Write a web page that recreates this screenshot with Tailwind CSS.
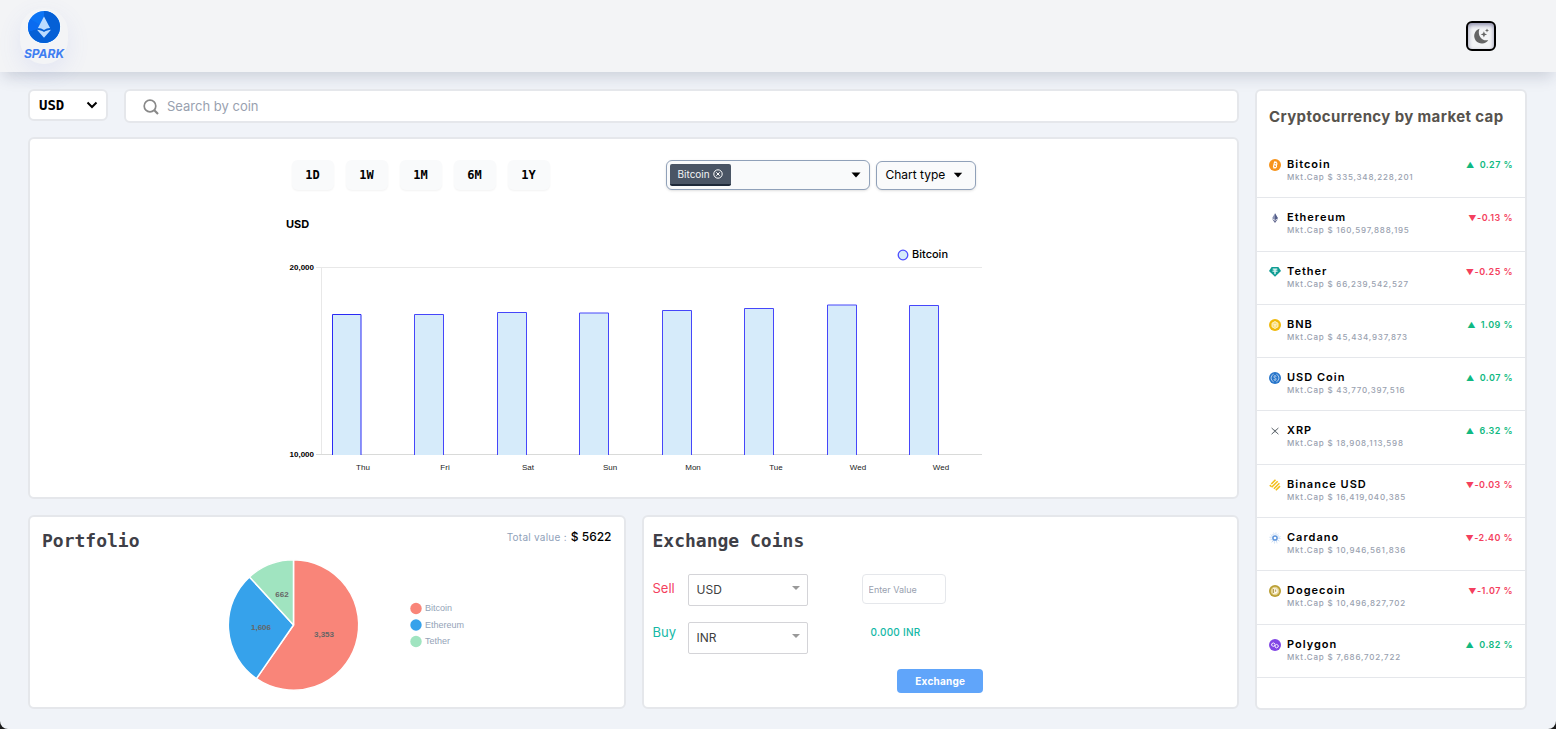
<!DOCTYPE html>
<html lang="en">
<head>
<meta charset="utf-8">
<meta name="viewport" content="width=device-width, initial-scale=1">
<title>Spark</title>
<script src="https://cdn.jsdelivr.net/npm/@tailwindcss/browser@4"></script>
</head>
<body class="bg-[#1c1c1c] font-['Inter',sans-serif] text-black">
<div class="flex min-h-screen flex-col rounded-b-lg bg-[#f0f3f8]">
  <header class="flex h-18 items-center justify-between bg-gray-100 pr-15 pl-5 shadow-[0_8px_14px_-3px_rgba(30,41,80,0.17)]">
    <a href="#" class="flex w-12 flex-col items-center rounded-full pt-[2px] shadow-[0_8px_24px_rgba(90,110,220,0.11)]">
      <svg class="size-[34px]" viewBox="0 0 36 36" aria-hidden="true">
        <circle cx="18" cy="18" r="18" fill="#f4fafe"/>
        <circle cx="18" cy="18" r="17" fill="#0b74f5"/>
        <path d="M18 18V1a17 17 0 1 1-16.300 21.800z" fill="#0560d6"/>
        <path d="M18 18 1.700 22.800A17 17 0 0 1 3.300 9.600z" fill="#0a6bf0"/>
        <path d="M18 6.800l6.400 12.300c-2.400.2-4.400.8-6.400 2-2-1.200-4-1.800-6.400-2z" fill="#bcdcff"/>
        <path d="M10.600 21c2.700.2 5 .9 7.400 2.300 2.400-1.400 4.700-2.100 7.400-2.300L18 29.500z" fill="#bcdcff"/>
      </svg>
      <span class="text-xs leading-5 font-bold text-[#3f7ef2] italic">SPARK</span>
    </a>
    <button type="button" aria-label="Toggle dark mode" class="flex size-[30px] items-center justify-center rounded-md border-2 border-black bg-gray-100 shadow-[inset_0_2px_4px_rgba(30,30,90,0.5)]">
      <svg class="size-4" viewBox="0 0 16 16" fill="#666" aria-hidden="true">
        <path d="M6.500.7A7.600 7.600 0 1 0 15.300 11.900C9.500 13.900 3.800 7.500 6.500.7z"/>
        <path d="M10.900 3.200l.9 2.300 2.300.9-2.300.9-.9 2.300-.9-2.300-2.300-.9 2.300-.9zM14 .4l.6 1.400 1.400.6-1.400.6L14 4.400 13.400 3 12 2.400l1.400-.6z"/>
      </svg>
    </button>
  </header>

  <div class="flex items-start gap-4 pt-[17px] pr-[29px] pb-4 pl-7">
    <main class="flex min-w-0 flex-1 flex-col">
      <div class="flex items-start gap-4">
        <div class="relative">
          <select aria-label="Currency" class="h-8 w-20 appearance-none rounded-md border-2 border-gray-200 bg-white pl-[9px] font-['DejaVu_Sans_Mono',monospace] text-sm font-bold">
            <option>USD</option><option>INR</option>
          </select>
          <svg class="pointer-events-none absolute top-3 right-[10px] h-2 w-3" viewBox="0 0 12 8" fill="none" stroke="#000" stroke-width="2" aria-hidden="true"><path d="M1.500 1.500 6 6l4.500-4.500"/></svg>
        </div>
        <label class="flex h-[34px] flex-1 items-center gap-2 rounded-md border-2 border-gray-200 bg-white pt-px pl-[17px]">
          <svg class="size-4 shrink-0" viewBox="0 0 16 16" fill="none" stroke="#888" aria-hidden="true"><circle cx="7" cy="7" r="5.800" stroke-width="1.700"/><path d="M11.300 11.300 15 15" stroke-width="2.200"/></svg>
          <input type="search" aria-label="Search by coin" placeholder="Search by coin" class="min-w-0 flex-1 text-[13px] outline-none placeholder:text-gray-400">
        </label>
      </div>

      <section class="mt-[14px] flex h-[362px] flex-col items-center rounded-md border-2 border-gray-200 bg-white pt-[21px]">
        <div class="flex w-[684px] items-center justify-between">
          <div class="flex gap-3 font-['DejaVu_Sans_Mono',monospace] text-xs font-bold">
            <button type="button" class="h-[30px] w-[42px] rounded-md bg-gray-50 shadow-xs">1D</button>
            <button type="button" class="h-[30px] w-[42px] rounded-md bg-gray-50 shadow-xs">1W</button>
            <button type="button" class="h-[30px] w-[42px] rounded-md bg-gray-50 shadow-xs">1M</button>
            <button type="button" class="h-[30px] w-[42px] rounded-md bg-gray-50 shadow-xs">6M</button>
            <button type="button" class="h-[30px] w-[42px] rounded-md bg-gray-50 shadow-xs">1Y</button>
          </div>
          <div class="flex items-center gap-[6px]">
            <div class="flex h-[30px] w-[204px] items-center justify-between rounded-md border border-slate-400 bg-gray-50 pr-2 pl-[3px] shadow-sm">
              <button type="button" aria-label="Remove Bitcoin" class="flex h-[22px] items-center gap-[3px] rounded-xs border-b-2 border-gray-800 bg-gray-600 px-2 text-[10px] text-gray-100">Bitcoin
                <svg class="size-[10px]" viewBox="0 0 10 10" fill="none" stroke="#fff" aria-hidden="true"><circle cx="5" cy="5" r="4.200"/><path d="M3.300 3.300l3.400 3.400m0-3.400L3.300 6.700"/></svg>
              </button>
              <button type="button" aria-label="Choose coins"><svg class="h-[6px] w-[10px]" viewBox="0 0 10 6" aria-hidden="true"><path d="M.5.5h9L5 5.500z"/></svg></button>
            </div>
            <button type="button" class="flex h-[29px] w-[100px] items-center gap-2 rounded-md border border-slate-400 bg-gray-50 pl-[9px] text-xs shadow-sm">Chart type
              <svg class="h-[6px] w-[10px]" viewBox="0 0 10 6" aria-hidden="true"><path d="M.8.8h8.400L5 5.500z"/></svg>
            </button>
          </div>
        </div>
        <svg class="mt-5 h-[270px] w-[700px]" viewBox="1 0 700 270" font-family="Liberation Sans, sans-serif" role="img" aria-label="Bitcoin price in USD, bar chart">
          <text x="3" y="18" font-size="11" font-weight="700" font-family="Inter, sans-serif">USD</text>
          <circle cx="620" cy="45" r="4.800" fill="#d6ebfa" stroke="#4d4dff" stroke-width="1.300"/>
          <text x="629" y="48" font-size="11" font-weight="500" font-family="Inter, sans-serif">Bitcoin</text>
          <g font-size="8" font-weight="700" text-anchor="end"><text x="31" y="60">20,000</text><text x="31" y="247">10,000</text></g>
          <path d="M33 57.500h666M38.500 57.500V244" fill="none" stroke="#e8e8e8"/>
          <path d="M33 244.500h666" stroke="#d9dad9"/>
          <g fill="#d6ebfa" stroke="#4646fa">
            <path d="M49.500 245V104.500h28.500V245" stroke="#2a2af5"/>
            <path d="M131.500 245V104.500h29V245"/>
            <path d="M214.500 245V102.500h29V245"/>
            <path d="M296.500 245V103h29V245"/>
            <path d="M379.500 245V100.500h29V245"/>
            <path d="M461.500 245V98.500h29V245"/>
            <path d="M544.500 245V95h29V245"/>
            <path d="M626.500 245V95.500h29V245"/>
          </g>
          <g font-size="8" text-anchor="middle" fill="#222"><text x="80" y="260">Thu</text><text x="162" y="260">Fri</text><text x="245" y="260">Sat</text><text x="327" y="260">Sun</text><text x="410" y="260">Mon</text><text x="493" y="260">Tue</text><text x="575" y="260">Wed</text><text x="658" y="260">Wed</text></g>
        </svg>
      </section>

      <div class="mt-4 grid grid-cols-2 gap-4">
        <section class="flex h-[194px] flex-col items-center rounded-md border-2 border-gray-200 bg-white px-3 pt-2">
          <div class="flex w-full items-start justify-between">
            <h2 class="pt-0.5 font-['DejaVu_Sans_Mono',monospace] text-lg leading-7 font-bold text-zinc-700">Portfolio</h2>
            <p class="flex items-baseline gap-1 text-[10px] leading-6 text-slate-400"><span class="tracking-wide">Total value :</span><span class="text-xs leading-6 font-medium text-black">$ 5622</span></p>
          </div>
          <svg class="h-[140px] w-[300px]" viewBox="0 0 300 140" font-family="Liberation Sans, sans-serif" role="img" aria-label="Portfolio: Bitcoin 3,353, Ethereum 1,606, Tether 662">
            <g stroke="#fff" stroke-width="1.500" stroke-linejoin="round">
              <path d="M116.500 70V4.800a65.200 65.200 0 1 1-37.100 118.800z" fill="#f98579"/>
              <path d="M116.500 70 79.400 123.600A65.200 65.200 0 0 1 72.500 21.900z" fill="#36a2eb"/>
              <path d="M116.500 70 72.500 21.900A65.200 65.200 0 0 1 116.500 4.800z" fill="#a0e4c0"/>
            </g>
            <g font-size="8" font-weight="700" fill="#666" text-anchor="middle"><text x="147" y="82">3,353</text><text x="84" y="75">1,606</text><text x="105" y="42">662</text></g>
            <circle cx="239" cy="53.500" r="5.700" fill="#f98579"/><circle cx="239" cy="70" r="5.700" fill="#36a2eb"/><circle cx="239" cy="86.500" r="5.700" fill="#a0e4c0"/>
            <g font-size="9" fill="#94a3b8"><text x="248" y="56">Bitcoin</text><text x="248" y="73">Ethereum</text><text x="248" y="89">Tether</text></g>
          </svg>
        </section>

        <section class="h-[194px] rounded-md border-2 border-gray-200 bg-white px-[9px] pt-[10px]">
          <h2 class="font-['DejaVu_Sans_Mono',monospace] text-lg leading-7 font-bold text-zinc-700">Exchange Coins</h2>
          <form class="flex flex-col pt-[19px]">
            <div class="flex h-8 items-start">
              <label for="sell" class="w-[35px] text-[13px] leading-7 text-[#f43f5e]">Sell</label>
              <div class="relative">
                <select id="sell" class="h-8 w-[120px] appearance-none rounded-xs border border-zinc-300 bg-white px-2 text-xs text-neutral-700"><option>USD</option><option>INR</option></select>
                <svg class="pointer-events-none absolute top-3 right-2 h-1 w-2" viewBox="0 0 8 4" fill="#999" aria-hidden="true"><path d="M0 0h8L4 4z"/></svg>
              </div>
              <input type="text" aria-label="Amount to sell" placeholder="Enter Value" class="ml-[54px] h-[30px] w-[84px] rounded-sm border border-gray-200 px-[6px] text-[9px] placeholder:text-gray-400">
            </div>
            <div class="mt-4 flex h-8 items-start">
              <label for="buy" class="w-[35px] text-[13px] leading-5 text-[#14b8a6]">Buy</label>
              <div class="relative">
                <select id="buy" class="h-8 w-[120px] appearance-none rounded-xs border border-zinc-300 bg-white px-2 text-xs text-neutral-700"><option>INR</option><option>USD</option></select>
                <svg class="pointer-events-none absolute top-3 right-2 h-1 w-2" viewBox="0 0 8 4" fill="#999" aria-hidden="true"><path d="M0 0h8L4 4z"/></svg>
              </div>
              <output for="sell buy" class="ml-[63px] text-[10px] leading-5 font-medium tracking-wide text-[#14b8a6]">0.000 INR</output>
            </div>
            <button type="button" class="mt-[15px] h-6 w-[86px] self-center rounded-sm bg-[#60a5fa] text-[10px] font-bold tracking-wide text-white">Exchange</button>
          </form>
        </section>
      </div>
    </main>

    <aside class="h-[621px] w-[272px] shrink-0 rounded-md border-2 border-gray-200 bg-white">
      <h2 class="px-3 pt-[14px] text-[15px] leading-6 font-bold tracking-wide text-stone-600">Cryptocurrency by market cap</h2>
      <ul id="coins" class="mt-4 grid h-[533px] grid-rows-10"></ul>
    </aside>
  </div>
</div>

<template id="coin-row">
  <li class="flex items-start justify-between border-b border-gray-200 px-3 pt-[11px]">
    <div class="flex items-start gap-[6px]">
      <svg class="mt-[3px] size-3" viewBox="0 0 12 12" aria-hidden="true"></svg>
      <div>
        <p data-name class="text-[11px] leading-4 font-semibold tracking-[1px]"></p>
        <p data-cap class="text-[8px] leading-[10px] font-medium tracking-widest text-gray-400"></p>
      </div>
    </div>
    <p class="flex items-center text-[9px] leading-[18px] font-semibold tracking-wider"><span data-arrow class="text-[8px]"></span><span data-change></span></p>
  </li>
</template>
<script>
const coins = [
  ['Bitcoin', '335,348,228,201', 0.27, '<circle cx="6" cy="6" r="6" fill="#f7931a"/><g transform="rotate(12 6 6)" fill="none" stroke="#fff" stroke-width="1.100"><path d="M4.500 3.500h2a1.100 1.100 0 0 1 0 2.300H4.800m1.700 0a1.300 1.300 0 0 1 0 2.700h-2M4.900 3.500v5M5.300 2.500v1m1.300-1v1M5.300 8.500v1m1.300-1v1"/></g>'],
  ['Ethereum', '160,597,888,195', -0.13, '<path d="M6 1.300 8.900 6.200 6 7.900 3.100 6.200z" fill="#8a92b2"/><path d="M6 1.300 8.900 6.200 6 7.900z" fill="#535d89"/><path d="M3.100 7 6 8.700 8.900 7 6 11z" fill="#62688f"/>'],
  ['Tether', '66,239,542,527', -0.25, '<path d="M2.600 1h6.800L12 5 6 10.800 0 5z" fill="#0f9d94"/><path d="M3.700 2.500h4.600v1.200H6.700v.8c3 .1 3 1.200 0 1.300V8.200H5.300V5.800c-3-.1-3-1.200 0-1.300v-.8H3.700z" fill="#e3f6f4"/>'],
  ['BNB', '45,434,937,873', 1.09, '<circle cx="6" cy="6" r="6" fill="#f0b90b"/><path d="M6 2.500 9 4.200v3.600L6 9.500 3 7.800V4.200z" fill="#f8dc7a"/><path d="M6 2.500 9 4.200v3.600L6 9.500 3 7.800V4.200zM4.300 5 6 6l1.700-1M6 6v2" fill="none" stroke="#fff6d6" stroke-width=".9"/>'],
  ['USD Coin', '43,770,397,516', 0.07, '<circle cx="6" cy="6" r="6" fill="#2775ca"/><path d="M4.600 2.200a4.100 4.100 0 0 0 0 7.600M7.400 2.200a4.100 4.100 0 0 1 0 7.600M7.300 4.800C7 3.600 4.800 3.700 4.800 4.900c0 1.400 2.500.8 2.500 2.200 0 1.200-2.400 1.200-2.600 0M6 3.200v.8m0 4v.8" fill="none" stroke="#cfe0f4" stroke-width=".8"/>'],
  ['XRP', '18,908,113,598', 6.32, '<path d="M2.600 3 5 5.200q1 .8 2 0L9.400 3M2.600 9.200 5 6.900q1-.8 2 0l2.400 2.300" fill="none" stroke="#555d64"/>'],
  ['Binance USD', '16,419,040,385', -0.03, '<path d="M2.500 4.700 6.700.500M2.800 8 8.900 1.900M5.100 9.500 10.600 4M1 5.800 2.400 7.200M7 11 11.200 6.800" transform="translate(-.2 .3)" fill="none" stroke="#f3bf1c" stroke-width="1.600"/>'],
  ['Cardano', '10,946,561,836', -2.4, '<circle cx="6" cy="6" r="2.100" fill="#fff" stroke="#5c94dc" stroke-width="1.500"/><circle cx="6" cy="6" r="4.100" fill="none" stroke="#9dc0ec" stroke-dasharray="1 1.150"/><circle cx="6" cy="6" r="5.500" fill="none" stroke="#c6daf4" stroke-width=".7" stroke-dasharray=".8 2.080"/>'],
  ['Dogecoin', '10,496,827,702', -1.07, '<circle cx="6" cy="6" r="6" fill="#ba9f33"/><circle cx="6" cy="6" r="4.300" fill="#e3d293"/><path d="M4 3.300h2.200c3.400 0 3.400 5.400 0 5.400H4z" fill="#fffaf0"/><path d="M4.600 4v4M6.700 4.500v2.300" stroke="#a58a35" stroke-width=".9"/>'],
  ['Polygon', '7,686,702,722', 0.82, '<circle cx="6" cy="6" r="6" fill="#8247e5"/><path d="M6 5.600V4.900L4.300 3.900l-1.600.9v1.700l1.600.9L6 6.400l1.600-1 1.600.9v1.700l-1.600.9L6 8V6.400" fill="none" stroke="#fff" stroke-width=".9"/>']
];
const list = document.getElementById('coins');
const row = document.getElementById('coin-row');
for (const [name, cap, change, icon] of coins) {
  const li = row.content.cloneNode(true);
  li.querySelector('svg').innerHTML = icon;
  li.querySelector('[data-name]').textContent = name;
  li.querySelector('[data-cap]').textContent = 'Mkt.Cap $ ' + cap;
  const arrow = li.querySelector('[data-arrow]');
  arrow.textContent = change > 0 ? '▲' : '▼';
  if (change > 0) arrow.classList.add('mr-[5px]');
  const value = li.querySelector('[data-change]');
  value.textContent = change.toFixed(2) + ' %';
  value.parentElement.classList.add(change > 0 ? 'text-[#10b981]' : 'text-[#f43f5e]');
  list.append(li);
}
</script>
</body>
</html>
